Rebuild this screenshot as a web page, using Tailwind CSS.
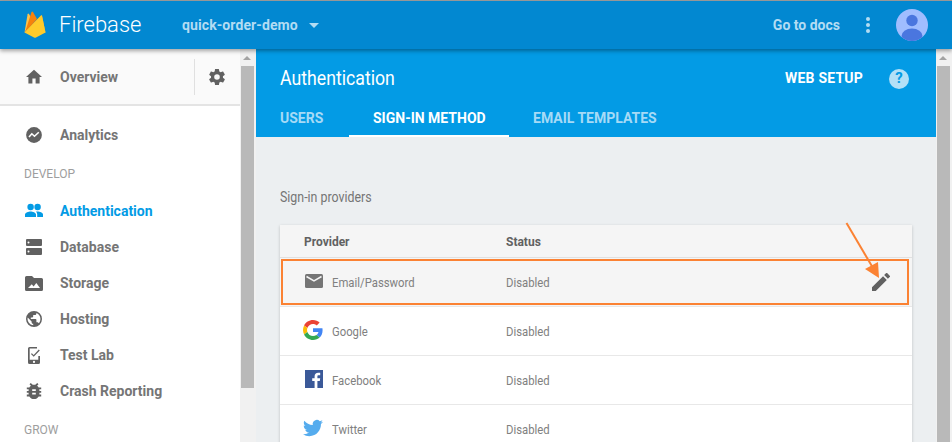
<!DOCTYPE html>
<html lang="en">
<head>
<meta charset="UTF-8">
<title>Firebase</title>
<script src="https://cdn.jsdelivr.net/npm/@tailwindcss/browser@4"></script>
</head>
<body class="h-[442px] w-[952px] overflow-hidden bg-[#eceff1] font-['Roboto',sans-serif]">
  <div class="h-[1px] bg-[#9e9e9e]"></div>

  <!-- top bar -->
  <header class="relative z-10 flex h-[48px] items-center bg-[#0288d1] pr-[24px] shadow-[0_2px_4px_rgba(0,0,0,0.35)]">
    <svg class="mb-[2px] ml-[24px] h-[27px] w-[22px]" viewBox="0 0 22 30" preserveAspectRatio="none">
      <path d="M0.5 24 L3.6 3.5 Q4 2 5 3.4 L8.5 10 Z" fill="#ffc24a"/>
      <path d="M7.5 1 Q8.2 0 9 1 L13 9 L1 24 Z" fill="#f6820c"/>
      <path d="M16.8 5.2 Q17.5 4.4 18 5.4 L21.5 24 L0.5 24 Z" fill="#fca326"/>
      <path d="M0.5 24 L10 29.5 Q11 30 12 29.5 L21.5 24 L18 5.4 Q17.5 4.4 16.8 5.2 L0.5 24 Z" fill="#ffcb2b"/>
    </svg>
    <span class="ml-[13px] w-[82px] text-[22px] leading-none font-light text-white">Firebase</span>
    <span class="ml-[41px] text-[14px] font-bold tracking-[0.1px] text-[#b3dcf3]">quick-order-demo</span>
    <span class="ml-[11px] h-0 w-0 border-x-[5px] border-t-[5px] border-x-transparent border-t-[#b3dcf3]"></span>
    <span class="ml-auto text-[14px] font-bold text-[#b3dcf3]">Go to docs</span>
    <span class="ml-[26px] flex flex-col gap-[2px]">
      <i class="size-[4px] rounded-full bg-[#b3dcf3]"></i>
      <i class="size-[4px] rounded-full bg-[#b3dcf3]"></i>
      <i class="size-[4px] rounded-full bg-[#b3dcf3]"></i>
    </span>
    <svg class="ml-[26px] size-[32px]" viewBox="0 0 32 32">
      <defs><clipPath id="avatar"><circle cx="16" cy="16" r="16"/></clipPath></defs>
      <circle cx="16" cy="16" r="16" fill="#a0bdff"/>
      <g clip-path="url(#avatar)" fill="#4a76df">
        <circle cx="16" cy="11.5" r="5.7"/>
        <ellipse cx="16" cy="27" rx="10.5" ry="7.5"/>
      </g>
    </svg>
  </header>

  <div class="flex h-[393px]">
    <!-- sidebar -->
    <aside class="w-[240px] shrink-0 bg-white text-[14px] font-bold text-[#757575]">
      <div class="flex h-[57px] items-center border-b-2 border-[#e4e4e4] bg-[#fafafa]">
        <svg class="ml-[26px] size-[16px]" viewBox="2 2 20 20" fill="#616161"><path d="M10 20v-6h4v6h5v-8h3L12 3 2 12h3v8z"/></svg>
        <span class="ml-[18px] translate-y-[1px]">Overview</span>
        <span class="ml-auto h-[36px] w-px bg-[#e0e0e0]"></span>
        <svg class="ml-[14px] mr-[15px] size-[16px]" viewBox="2 2 20 20" fill="#616161"><path d="M19.4 13c.04-.32.1-.66.1-1s-.06-.68-.1-1l2.1-1.65c.2-.15.25-.42.13-.64l-2-3.46c-.12-.22-.4-.3-.6-.22l-2.5 1c-.52-.4-1.08-.73-1.7-.98l-.37-2.65A.5.5 0 0 0 14 2h-4c-.25 0-.46.18-.5.42l-.37 2.65c-.62.25-1.18.59-1.7.98l-2.5-1c-.23-.08-.48 0-.6.22l-2 3.46c-.13.22-.07.49.12.64L4.57 11c-.04.32-.07.66-.07 1s.03.68.07 1l-2.11 1.65c-.19.15-.25.42-.12.64l2 3.46c.12.22.37.3.6.22l2.49-1c.52.4 1.08.73 1.7.98l.37 2.65c.04.24.25.42.5.42h4c.25 0 .46-.18.5-.42l.37-2.65c.62-.25 1.18-.59 1.7-.98l2.5 1c.22.08.48 0 .6-.22l2-3.46c.12-.22.07-.49-.13-.64zM12 15.5a3.5 3.5 0 1 1 0-7 3.5 3.5 0 0 1 0 7z"/></svg>
      </div>

      <nav class="pt-[11px]">
        <div class="flex h-[36px] items-center">
          <svg class="ml-[26px] size-[16px]" viewBox="0 0 17 17"><circle cx="8.5" cy="8.5" r="8.4" fill="#616161"/><path d="M3.2 10.6 L6.2 7.2 L9 9.8 L13.6 5.6" fill="none" stroke="#fff" stroke-width="1.7"/></svg>
          <span class="ml-[18px]">Analytics</span>
        </div>
        <div class="mt-[11px] flex h-[20px] items-center pl-[24px] text-[12px] font-normal text-[#9e9e9e]">DEVELOP</div>
        <div class="mt-[9px] flex h-[36px] items-center text-[#039be5]">
          <svg class="ml-[24px] size-[20px]" viewBox="0 0 20 20" fill="#039be5"><circle cx="6.6" cy="6" r="3.2"/><circle cx="13.6" cy="6" r="3.2"/><path d="M1 16v-2.4C1 11.4 4.6 10.4 6.6 10.4s5.4 1 5.4 3.2V16zM13.2 16v-2.6c0-1.2-.6-2.2-1.4-2.9.7-.1 1.4-.1 1.8-.1 2 0 5.4 1 5.4 3.1V16z"/></svg>
          <span class="ml-[16px]">Authentication</span>
        </div>
        <div class="flex h-[36px] items-center">
          <svg class="ml-[26px] size-[16px]" viewBox="0 0 16 16" fill="#616161"><path fill-rule="evenodd" d="M1 0h14a1 1 0 0 1 1 1v5a1 1 0 0 1-1 1H1a1 1 0 0 1-1-1V1a1 1 0 0 1 1-1zm1.5 2.5a1 1 0 1 0 0 2 1 1 0 0 0 0-2zM1 9h14a1 1 0 0 1 1 1v5a1 1 0 0 1-1 1H1a1 1 0 0 1-1-1v-5a1 1 0 0 1 1-1zm1.5 2.5a1 1 0 1 0 0 2 1 1 0 0 0 0-2z"/></svg>
          <span class="ml-[18px]">Database</span>
        </div>
        <div class="flex h-[36px] items-center">
          <svg class="ml-[25px] h-[15px] w-[18px]" viewBox="0 0 18 15" fill="#616161"><path fill-rule="evenodd" d="M1.5 0H7l2 2h7.5A1.5 1.5 0 0 1 18 3.5v10a1.5 1.5 0 0 1-1.500 1.500h-15A1.500 1.500 0 0 1 0 13.500v-12A1.500 1.500 0 0 1 1.500 0zM3 12h12l-3.700-5-2.700 3.500L6.800 8.300z"/></svg>
          <span class="ml-[17px]">Storage</span>
        </div>
        <div class="flex h-[36px] items-center">
          <svg class="ml-[26px] size-[16px]" viewBox="2 2 20 20" fill="#616161"><path d="M12 2a10 10 0 1 0 0 20 10 10 0 0 0 0-20zm-1 17.900A8 8 0 0 1 4.200 10L9 15v1c0 1.100.9 2 2 2zm6.900-2.500c-.3-.8-1-1.400-1.900-1.400h-1v-3c0-.6-.4-1-1-1H8v-2h2c.6 0 1-.4 1-1V7h2c1.100 0 2-.9 2-2v-.4a8 8 0 0 1 2.900 12.800z"/></svg>
          <span class="ml-[18px]">Hosting</span>
        </div>
        <div class="flex h-[36px] items-center">
          <svg class="ml-[28px] h-[17px] w-[12px]" viewBox="0 0 12 17" fill="#616161"><path fill-rule="evenodd" d="M1.500 0H9v1.600H1.700v11.200h8.600V9H12v6.500a1.500 1.500 0 0 1-1.500 1.500h-9A1.500 1.500 0 0 1 0 15.500v-14A1.500 1.500 0 0 1 1.500 0zM6 13.800a1.100 1.100 0 1 0 0 2.200 1.100 1.100 0 0 0 0-2.200z"/><path d="M3.400 6.600 L5.700 8.900 L11.300 3" fill="none" stroke="#616161" stroke-width="1.300"/></svg>
          <span class="ml-[20px]">Test Lab</span>
        </div>
        <div class="flex h-[36px] items-center">
          <svg class="ml-[25px] size-[18px]" viewBox="2 2 20 20" fill="#616161"><path d="M20 8h-2.800c-.45-.78-1.070-1.450-1.820-1.960L17 4.410 15.590 3l-2.170 2.170C12.960 5.060 12.490 5 12 5s-.96.060-1.410.17L8.410 3 7 4.410l1.620 1.630C7.880 6.550 7.260 7.220 6.810 8H4v2h2.090c-.05.33-.09.66-.09 1v1H4v2h2v1c0 .34.040.67.090 1H4v2h2.810c1.040 1.790 2.970 3 5.190 3s4.150-1.210 5.190-3H20v-2h-2.090c.05-.33.090-.66.090-1v-1h2v-2h-2v-1c0-.34-.04-.67-.09-1H20V8zm-6 8h-4v-2h4v2zm0-4h-4v-2h4v2z"/></svg>
          <span class="ml-[17px]">Crash Reporting</span>
        </div>
        <div class="mt-[11px] flex h-[20px] items-center pl-[24px] text-[12px] font-normal text-[#9e9e9e]">GROW</div>
      </nav>
    </aside>

    <!-- sidebar scrollbar -->
    <div class="flex w-[16px] shrink-0 flex-col items-start bg-[#f1f1f1] pl-[1px]">
      <span class="ml-[2px] mt-[7px] h-0 w-0 border-x-[4px] border-b-[4px] border-x-transparent border-b-[#a3a3a3]"></span>
      <span class="mt-[6px] h-[322px] w-[13px] bg-[#b9b9b9]"></span>
    </div>

    <!-- main -->
    <main class="relative min-w-0 flex-1">
      <div class="h-[88px] bg-[#039be5] pl-[24px] pr-[27px]">
        <div class="flex h-[59px] items-center">
          <h1 class="origin-left -translate-y-[1px] scale-x-[0.885] text-[20px] font-normal text-white">Authentication</h1>
          <span class="ml-auto text-[14px] font-bold tracking-[0.2px] text-white">WEB SETUP</span>
          <span class="ml-[26px] flex size-[20px] items-center justify-center rounded-full bg-[#b3e0f7] text-[15px] font-bold text-[#039be5]">?</span>
        </div>
        <div class="flex h-[29px] text-[14px] font-bold text-[#a6daf6]">
          <span class="w-[45px]">USERS</span>
          <span class="ml-[24px] h-[29px] w-[160px] border-b-[2px] border-white pl-[24px] text-white">SIGN-IN METHOD</span>
          <span class="ml-[24px]">EMAIL TEMPLATES</span>
        </div>
      </div>

      <p class="ml-[24px] mt-[50px] origin-left scale-x-[0.885] text-[14px] leading-[20px] text-[#757575]">Sign-in providers</p>

      <div class="ml-[24px] mt-[18px] w-[632px] bg-white text-[13px] text-[#808080] shadow-[0_1px_3px_rgba(0,0,0,0.2)]">
        <div class="flex h-[33px] items-center border-b border-[#e0e0e0] bg-[#f5f5f5] pl-[24px] text-[12px] font-bold text-[#616161]">
          <span class="w-[202px] translate-y-[1px]">Provider</span>
          <span class="translate-y-[1px]">Status</span>
        </div>
        <div class="flex h-[49px] items-center border-b border-[#e8e8e8] bg-[#f5f5f5] pl-[24px]">
          <span class="flex w-[18px] justify-center">
            <svg class="mb-[2px] ml-[1px] h-[14px] w-[18px] shrink-0" viewBox="0 0 18 14"><rect width="18" height="14" rx="1.500" fill="#757575"/><path d="M1.500 2.500 L9 7 L16.500 2.500" fill="none" stroke="#f5f5f5" stroke-width="1.500"/></svg>
          </span>
          <span class="ml-[10px] w-[174px] origin-left translate-y-[1px] scale-x-[0.87]">Email/Password</span>
          <span class="origin-left translate-y-[1px] scale-x-[0.87]">Disabled</span>
          <svg class="ml-auto mr-[22px] size-[18px]" viewBox="3 3 18 18" fill="#616161"><path d="M3 17.250V21h3.750L17.810 9.940l-3.750-3.750L3 17.250zM20.710 7.040a1 1 0 0 0 0-1.410l-2.340-2.340a1 1 0 0 0-1.410 0l-1.830 1.830 3.750 3.750 1.830-1.830z"/></svg>
        </div>
        <div class="flex h-[49px] items-center border-b border-[#e8e8e8] pl-[24px]">
          <span class="flex w-[18px] justify-center">
            <svg class="mb-[2px] size-[20px] shrink-0" viewBox="0 0 48 48"><path fill="#ea4335" d="M24 9.500c3.500 0 6.700 1.300 9.100 3.500l6.800-6.800C35.800 2.400 30.200 0 24 0 14.600 0 6.500 5.400 2.600 13.200l7.900 6.100C12.400 13.600 17.700 9.500 24 9.500z"/><path fill="#4285f4" d="M47 24.500c0-1.600-.2-3.100-.4-4.500H24v9h13c-.6 3-2.300 5.500-4.800 7.200l7.700 6C44.300 38 47 31.800 47 24.500z"/><path fill="#fbbc05" d="M10.500 28.700C10 27.200 9.700 25.600 9.700 24s.3-3.200.8-4.700l-7.900-6.100C1 16.400 0 20.100 0 24s1 7.600 2.600 10.800z"/><path fill="#34a853" d="M24 48c6.500 0 11.900-2.100 15.900-5.800l-7.700-6c-2.200 1.400-4.900 2.300-8.200 2.300-6.300 0-11.600-4.200-13.500-9.800l-7.900 6.100C6.500 42.600 14.600 48 24 48z"/></svg>
          </span>
          <span class="ml-[10px] w-[174px] origin-left translate-y-[1px] scale-x-[0.87]">Google</span>
          <span class="origin-left translate-y-[1px] scale-x-[0.87]">Disabled</span>
        </div>
        <div class="flex h-[49px] items-center border-b border-[#e8e8e8] pl-[24px]">
          <span class="flex w-[18px] justify-center">
            <svg class="mb-[2px] ml-[1px] size-[18px] shrink-0" viewBox="0 0 18 18"><rect width="18" height="18" fill="#3b5998"/><path d="M12.400 18v-7h2.400l.4-2.700h-2.800V6.500c0-.8.2-1.300 1.400-1.300h1.400V2.800c-.3 0-1.100-.1-2.100-.1-2.100 0-3.500 1.300-3.500 3.600v2H7.200V11h2.400v7z" fill="#fff"/></svg>
          </span>
          <span class="ml-[10px] w-[174px] origin-left translate-y-[1px] scale-x-[0.87]">Facebook</span>
          <span class="origin-left translate-y-[1px] scale-x-[0.87]">Disabled</span>
        </div>
        <div class="flex h-[49px] items-center pl-[24px]">
          <span class="flex w-[18px] justify-center">
            <svg class="mb-[3px] size-[20px] shrink-0" viewBox="0 0 24 24" fill="#55acee"><path d="M23.950 4.570a10 10 0 0 1-2.820.78 4.960 4.960 0 0 0 2.160-2.720c-.95.560-2 .97-3.130 1.200a4.920 4.920 0 0 0-8.380 4.480C7.690 8.090 4.070 6.120 1.640 3.160a4.820 4.820 0 0 0-.67 2.480c0 1.710.87 3.210 2.190 4.100a4.900 4.900 0 0 1-2.230-.62v.06a4.920 4.920 0 0 0 3.950 4.830c-.72.190-1.480.22-2.220.08a4.940 4.940 0 0 0 4.600 3.420A9.870 9.870 0 0 1 0 19.540a13.940 13.940 0 0 0 7.550 2.210c9.050 0 14-7.500 14-13.980 0-.21 0-.42-.02-.63.960-.69 1.800-1.560 2.460-2.550z"/></svg>
          </span>
          <span class="ml-[10px] w-[174px] origin-left scale-x-[0.87]">Twitter</span>
          <span class="origin-left scale-x-[0.87]">Disabled</span>
        </div>
      </div>

      <!-- annotation drawn over the table -->
      <div class="absolute left-[25px] top-[210px] h-[46px] w-[628px] border-2 border-[#fb8233]"></div>
      <svg class="absolute left-[580px] top-[170px] h-[70px] w-[60px]" viewBox="0 0 60 70">
        <path d="M10.500 4 L37 49" stroke="#fb8233" stroke-width="2" fill="none"/>
        <path d="M29 50 L42 43 L43 59 Z" fill="#fb8233"/>
      </svg>
    </main>

    <!-- page scrollbar -->
    <div class="flex w-[16px] shrink-0 flex-col items-start bg-[#f1f1f1] pl-[1px]">
      <span class="ml-[2px] mt-[7px] h-0 w-0 border-x-[4px] border-b-[4px] border-x-transparent border-b-[#a3a3a3]"></span>
      <span class="mt-[6px] h-[378px] w-[13px] bg-[#b9b9b9]"></span>
    </div>
  </div>
</body>
</html>
